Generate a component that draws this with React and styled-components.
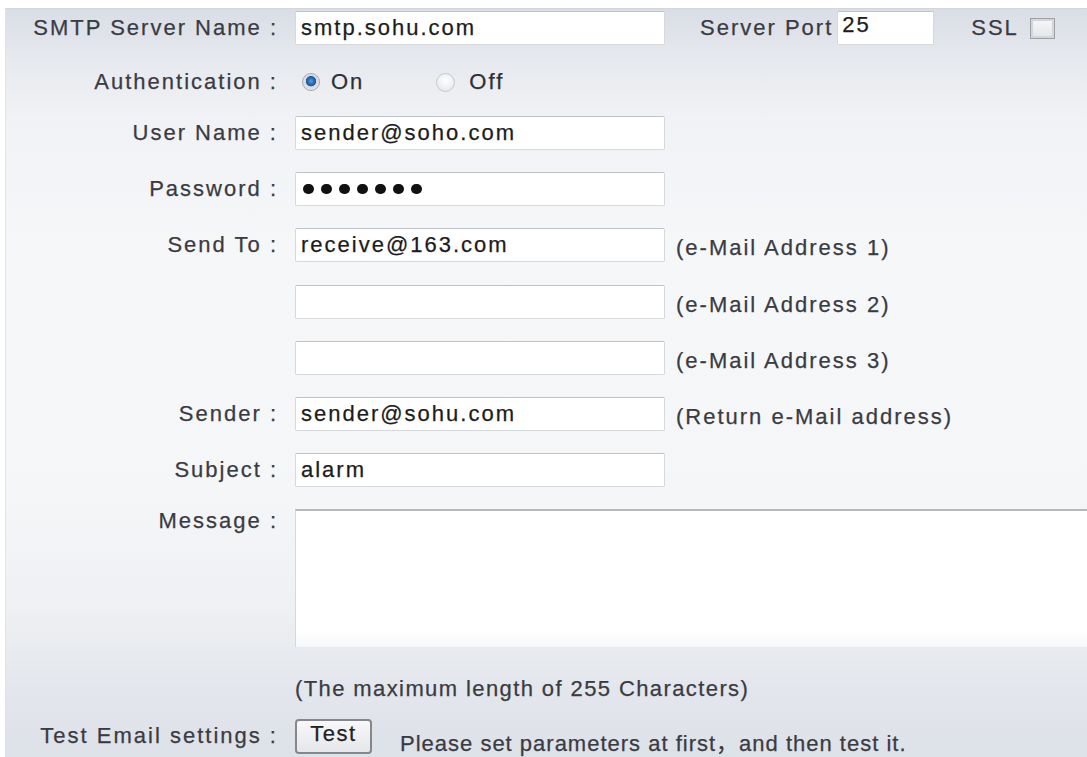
import React from "react";
import styled, { createGlobalStyle } from "styled-components";

const GlobalStyle = createGlobalStyle`
  html, body {
    margin: 0;
    padding: 0;
    background: #ffffff;
  }
  body {
    font-family: "Liberation Sans", Arial, "Noto Sans CJK SC", sans-serif;
    font-size: 22px;
    letter-spacing: 2px;
    color: #3a3b42;
    -webkit-text-stroke: 0.25px currentColor;
    overflow: hidden;
  }
`;

const Panel = styled.div`
  margin: 8px 0 0 5px;
  height: 749px;
  padding-top: 2px;
  box-sizing: border-box;
  display: flex;
  flex-direction: column;
  overflow: hidden;
  border-top: 1px solid #d3d6dc;
  border-left: 1px solid #e2e4e8;
  background: linear-gradient(
    to bottom,
    #d9dde5 0px,
    #e6e9ee 50px,
    #f1f2f5 110px,
    #f6f7f9 250px,
    #f5f6f8 480px,
    #eef0f3 600px,
    #e3e6ec 680px,
    #dde1e8 749px
  );
`;

const Row = styled.div`
  display: flex;
  align-items: ${(p) => (p.$top ? "flex-start" : "center")};
  height: ${(p) => p.$h || 34}px;
  margin-top: ${(p) => p.$mt || 0}px;
  flex-shrink: 0;
`;

const Label = styled.label`
  width: 272px;
  flex-shrink: 0;
  text-align: right;
  margin-right: 17px;
  line-height: 24px;
  white-space: nowrap;
  color: #3a3b42;
`;

const TextInput = styled.input`
  box-sizing: border-box;
  width: ${(p) => p.$w || 370}px;
  height: 34px;
  margin: 0;
  padding: ${(p) => (p.$raised ? "0 4px 6px" : "0 5px")};
  border: 1px solid #d6d8dc;
  border-top-color: #bfc2c8;
  border-radius: 2px;
  background: #ffffff;
  font: inherit;
  letter-spacing: inherit;
  color: #1c1c1c;
  -webkit-text-stroke: 0.25px #1c1c1c;
  outline: none;
  flex-shrink: 0;
`;

const MaskedField = styled.div`
  box-sizing: border-box;
  width: 370px;
  height: 34px;
  padding: 0 7px;
  border: 1px solid #d6d8dc;
  border-top-color: #bfc2c8;
  border-radius: 2px;
  background: #ffffff;
  display: flex;
  align-items: center;
  gap: 7.5px;
  flex-shrink: 0;
`;

const Dot = styled.span`
  width: 10.5px;
  height: 10.5px;
  border-radius: 50%;
  background: #111111;
`;

const Note = styled.span`
  margin-left: ${(p) => p.$ml ?? 11}px;
  margin-top: ${(p) => p.$dy || 0}px;
  letter-spacing: ${(p) => p.$ls ?? 2}px;
  white-space: nowrap;
  color: #3a3b42;
`;

const InlineLabel = styled.span`
  margin-left: ${(p) => p.$ml}px;
  margin-right: ${(p) => p.$mr || 0}px;
  white-space: nowrap;
  color: #3a3b42;
`;

const Checkbox = styled.span`
  box-sizing: border-box;
  width: 25px;
  height: 21px;
  margin-left: 11px;
  border: 1.5px solid #9ea1a6;
  background: linear-gradient(to bottom, #f7f7f8, #e4e5e8);
  box-shadow: inset 0 0 0 2px #d4d6da;
  flex-shrink: 0;
`;

const RadioGroup = styled.div`
  display: flex;
  align-items: center;
`;

const Radio = styled.span`
  box-sizing: border-box;
  width: ${(p) => (p.$checked ? 18 : 19)}px;
  height: ${(p) => (p.$checked ? 18 : 19)}px;
  border-radius: 50%;
  margin-left: ${(p) => p.$ml}px;
  border: 1.5px solid ${(p) => (p.$checked ? "#a4a7ad" : "#c8cacf")};
  background: ${(p) =>
    p.$checked
      ? "radial-gradient(circle at 50% 45%, #5a9cdc 0, #2366ad 3.5px, #1d5a9c 4.8px, #d6d9df 5.5px, #f3f4f6 100%)"
      : "radial-gradient(circle at 50% 40%, #ffffff 0, #eef0f2 55%, #d9dbe0 100%)"};
  flex-shrink: 0;
`;

const RadioText = styled.span`
  margin-left: ${(p) => p.$ml}px;
  color: #2e2f36;
`;

const TextArea = styled.textarea`
  box-sizing: border-box;
  width: 820px;
  height: 138px;
  margin: 0;
  padding: 6px;
  border: none;
  border-top: 2px solid #b5b8bd;
  border-left: 1px solid #d6d8dc;
  background: linear-gradient(to bottom, #ffffff 0, #ffffff 88%, #f6f7f9 100%);
  resize: none;
  outline: none;
  font: inherit;
  flex-shrink: 0;
`;

const Button = styled.button`
  box-sizing: border-box;
  width: 77px;
  height: 35px;
  margin: 0;
  padding: 0 0 5px;
  border: 2px solid #85878c;
  border-radius: 4px;
  background: linear-gradient(to bottom, #f8f8f9, #e6e7ea);
  font: inherit;
  letter-spacing: 1.5px;
  color: #1f1f24;
  -webkit-text-stroke: 0.25px #1f1f24;
  flex-shrink: 0;
`;

export default function App() {
  return (
    <>
      <GlobalStyle />
      <Panel>
        <Row>
          <Label>SMTP Server Name :</Label>
          <TextInput readOnly defaultValue="smtp.sohu.com" />
          <InlineLabel $ml={35} $mr={4}>Server Port</InlineLabel>
          <TextInput readOnly $w={97} $raised defaultValue="25" />
          <InlineLabel $ml={37}>SSL</InlineLabel>
          <Checkbox />
        </Row>

        <Row $mt={20}>
          <Label>Authentication :</Label>
          <RadioGroup>
            <Radio $checked $ml={7} />
            <RadioText $ml={11}>On</RadioText>
            <Radio $ml={72} />
            <RadioText $ml={14}>Off</RadioText>
          </RadioGroup>
        </Row>

        <Row $mt={17}>
          <Label>User Name :</Label>
          <TextInput readOnly defaultValue="sender@soho.com" />
        </Row>

        <Row $mt={22}>
          <Label>Password :</Label>
          <MaskedField>
            {Array.from({ length: 7 }).map((_, i) => (
              <Dot key={i} />
            ))}
          </MaskedField>
        </Row>

        <Row $mt={22}>
          <Label>Send To :</Label>
          <TextInput readOnly defaultValue="receive@163.com" />
          <Note $dy={6}>(e-Mail Address 1)</Note>
        </Row>

        <Row $mt={23}>
          <Label />
          <TextInput readOnly defaultValue="" />
          <Note $dy={6}>(e-Mail Address 2)</Note>
        </Row>

        <Row $mt={22}>
          <Label />
          <TextInput readOnly defaultValue="" />
          <Note $dy={6}>(e-Mail Address 3)</Note>
        </Row>

        <Row $mt={22}>
          <Label>Sender :</Label>
          <TextInput readOnly defaultValue="sender@sohu.com" />
          <Note $dy={6}>(Return e-Mail address)</Note>
        </Row>

        <Row $mt={22}>
          <Label>Subject :</Label>
          <TextInput readOnly defaultValue="alarm" />
        </Row>

        <Row $mt={22} $h={138} $top>
          <Label>Message :</Label>
          <TextArea readOnly defaultValue="" />
        </Row>

        <Row $mt={25}>
          <Label />
          <Note $ml={0} $ls={1.4}>(The maximum length of 255 Characters)</Note>
        </Row>

        <Row $mt={13}>
          <Label>Test Email settings :</Label>
          <Button type="button">Test</Button>
          <Note $ml={28} $dy={10} $ls={1}>Please set parameters at first，and then test it.</Note>
        </Row>
      </Panel>
    </>
  );
}
